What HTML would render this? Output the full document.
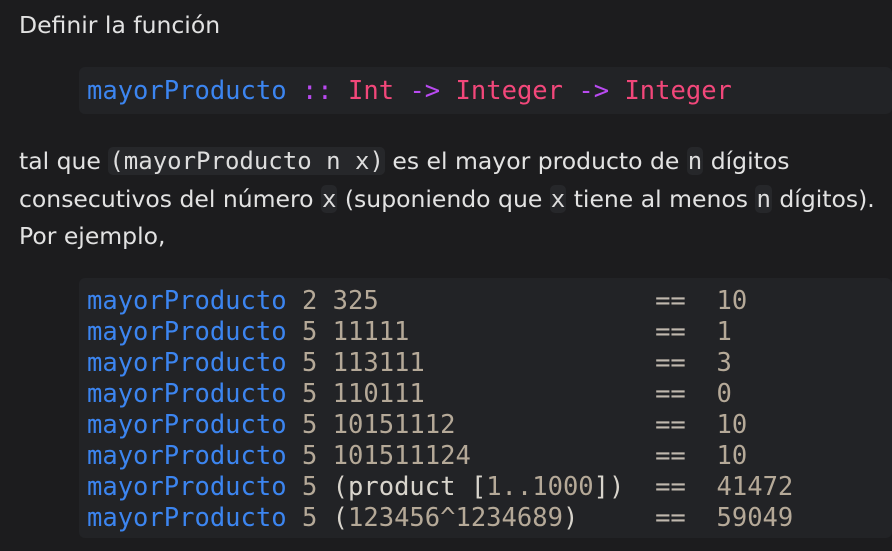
<!DOCTYPE html>
<html><head><meta charset="utf-8"><style>
body{margin:0;width:892px;height:551px;background:#1c1c1e;overflow:hidden;position:relative;font-family:"DejaVu Sans","Liberation Sans",sans-serif;color:#e2e2e2}
.t{position:absolute;left:19px;font-size:23.5px;line-height:37.5px;white-space:nowrap}
.blk{position:absolute;left:79px;right:0;background:#222326;border-radius:6px}
pre{margin:0;font-family:"DejaVu Sans Mono",monospace;font-size:25.5px;line-height:31px;position:absolute;left:8px;color:#b5a998}
.b{color:#3c85f0}.p{color:#f2477a}.v{color:#b94af0}.w{color:#d8d4cc}.e{color:#c0b8ae}
code{font-family:"DejaVu Sans Mono",monospace;font-size:24px;background:#26272a;border-radius:5px;padding:0 1px;color:#ddd}
</style></head><body>
<div class="t" style="top:7px">Definir la función</div>
<div class="blk" style="top:67px;height:47px"><pre style="top:9px"><span class="b">mayorProducto</span> <span class="v">::</span> <span class="p">Int</span> <span class="v">-&gt;</span> <span class="p">Integer</span> <span class="v">-&gt;</span> <span class="p">Integer</span></pre></div>
<div class="t" style="top:143px">tal que <code>(mayorProducto n x)</code> es el mayor producto de <code>n</code> dígitos<br>consecutivos del número <code>x</code> (suponiendo que <code>x</code> tiene al menos <code>n</code> dígitos).<br>Por ejemplo,</div>
<div class="blk" style="top:278px;height:260px"><pre style="top:8px"><span class="b">mayorProducto</span> 2 325                  <span class="e">==</span>  10
<span class="b">mayorProducto</span> 5 11111                <span class="e">==</span>  1
<span class="b">mayorProducto</span> 5 113111               <span class="e">==</span>  3
<span class="b">mayorProducto</span> 5 110111               <span class="e">==</span>  0
<span class="b">mayorProducto</span> 5 10151112             <span class="e">==</span>  10
<span class="b">mayorProducto</span> 5 101511124            <span class="e">==</span>  10
<span class="b">mayorProducto</span> 5 <span class="w">(product [</span>1..1000<span class="w">])</span>  <span class="e">==</span>  41472
<span class="b">mayorProducto</span> 5 <span class="w">(</span>123456^1234689<span class="w">)</span>     <span class="e">==</span>  59049</pre></div>
</body></html>
